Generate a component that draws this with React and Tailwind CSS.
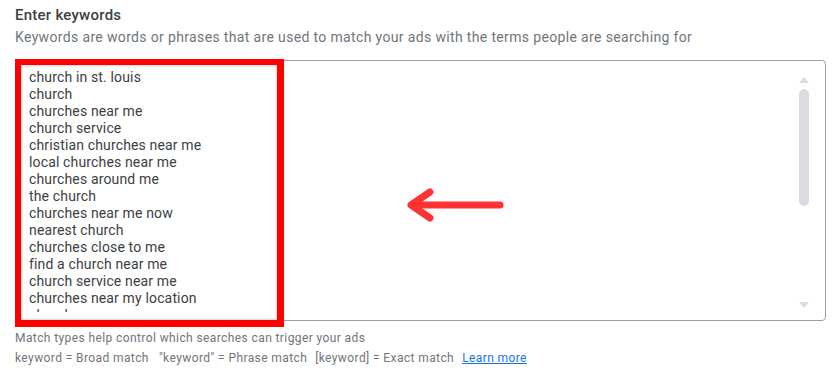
import React from "react";

export default function App() {
  // keyword list shown in the textarea
  const keywords = [
    "church in st. louis",
    "church",
    "churches near me",
    "church service",
    "christian churches near me",
    "local churches near me",
    "churches around me",
    "the church",
    "churches near me now",
    "nearest church",
    "churches close to me",
    "find a church near me",
    "church service near me",
    "churches near my location",
    "church near me open",
  ];

  return (
    <div
      className="relative w-[837px] h-[378px] bg-white px-[15px] pt-[5px]"
      style={{ fontFamily: "Roboto, 'Liberation Sans', sans-serif" }}
    >
      {/* Header */}
      <h1 className="text-[15px] leading-[20px] font-medium tracking-[0.25px] text-[#3c4043]">
        Enter keywords
      </h1>
      <p className="mt-[2px] text-[14px] leading-[20px] tracking-[0.35px] text-[#70757a]">
        Keywords are words or phrases that are used to match your ads with the terms people are searching for
      </p>

      {/* Textarea */}
      <div className="mt-[13px] ml-[1px] w-[810px] h-[261px] border border-[#9aa0a6] rounded-[4px] flex">
        <div className="flex-1 pl-[12px] pt-[8px]">
          <div className="h-[243px] overflow-hidden text-[14px] leading-[17px] tracking-[0.15px] text-[#3c4043]">
            {keywords.map((k, i) => (
              <div key={i}>{k}</div>
            ))}
          </div>
        </div>

        {/* scrollbar */}
        <div className="w-[12px] mr-[15px] flex flex-col items-center pt-[16px] pb-[12px]">
          <div className="w-0 h-0 border-l-[5px] border-r-[5px] border-b-[6px] border-l-transparent border-r-transparent border-b-[#dadce0]" />
          <div className="mt-[6px] w-[10px] h-[117px] rounded-full bg-[#dadce0]" />
          <div className="flex-1" />
          <div className="w-0 h-0 border-l-[5px] border-r-[5px] border-t-[6px] border-l-transparent border-r-transparent border-t-[#dadce0]" />
        </div>
      </div>

      {/* Footer help text */}
      <div className="mt-[7px] text-[12px] leading-[20px] tracking-[0.4px] text-[#70757a]">
        <p>Match types help control which searches can trigger your ads</p>
        <p className="flex">
          <span>keyword = Broad match</span>
          <span className="ml-[10px]">"keyword" = Phrase match</span>
          <span className="ml-[8px]">[keyword] = Exact match</span>
          <a href="#" className="ml-[8px] text-[#1a73e8] underline">
            Learn more
          </a>
        </p>
      </div>

      {/* Red highlight annotation */}
      <div className="absolute left-[15px] top-[59px] w-[269px] h-[268px] border-l-[6px] border-t-[6px] border-r-[7px] border-b-[7px] border-[#ff0000]">
        <div className="w-full h-full shadow-[inset_0_0_3px_rgba(0,0,0,0.35)]" />
      </div>

      {/* Arrow annotation */}
      <svg className="absolute left-[400px] top-[185px]" width="110" height="40" viewBox="0 0 110 40">
        <g stroke="#ff3333" strokeWidth="7" strokeLinecap="round" strokeLinejoin="round" fill="none">
          <line x1="13" y1="20" x2="100" y2="20" />
          <polyline points="30,7 11,20 30,33" />
        </g>
      </svg>
    </div>
  );
}
